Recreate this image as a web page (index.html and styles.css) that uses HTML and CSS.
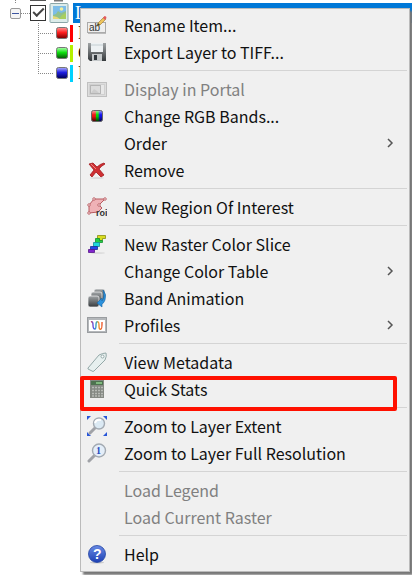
FILE: index.html
```
<!DOCTYPE html>
<html lang="en">
<head>
<meta charset="utf-8">
<title>Layer Manager</title>
<link rel="stylesheet" href="styles.css">
</head>
<body>
<svg class="defs" aria-hidden="true">
  <defs>
    <linearGradient id="gray" x1="0" y1="0" x2="0" y2="1"><stop offset="0" stop-color="#a0a4a6"/><stop offset="1" stop-color="#35393c"/></linearGradient>
    <linearGradient id="red" x1="0" y1="0" x2="0" y2="1"><stop offset="0" stop-color="#ff9a9a"/><stop offset=".45" stop-color="#ff2020"/><stop offset="1" stop-color="#700"/></linearGradient>
    <linearGradient id="green" x1="0" y1="0" x2="0" y2="1"><stop offset="0" stop-color="#b0ffb0"/><stop offset=".45" stop-color="#10e010"/><stop offset="1" stop-color="#065006"/></linearGradient>
    <linearGradient id="blue" x1="0" y1="0" x2="0" y2="1"><stop offset="0" stop-color="#b0b0ff"/><stop offset=".45" stop-color="#2020e0"/><stop offset="1" stop-color="#000050"/></linearGradient>
    <linearGradient id="rgb"><stop offset=".1" stop-color="#f01414"/><stop offset=".35" stop-color="#f01414"/><stop offset=".45" stop-color="#0d0"/><stop offset=".6" stop-color="#0d0"/><stop offset=".75" stop-color="#11e"/></linearGradient>
    <linearGradient id="shade" x1="0" y1="0" x2="0" y2="1"><stop offset="0" stop-color="#fff" stop-opacity=".6"/><stop offset=".4" stop-color="#fff" stop-opacity="0"/><stop offset=".5" stop-opacity="0"/><stop offset="1" stop-opacity=".75"/></linearGradient>
    <linearGradient id="help" x1="0" y1="0" x2="0" y2="1"><stop offset="0" stop-color="#6a8be4"/><stop offset="1" stop-color="#1c40b4"/></linearGradient>
    <linearGradient id="wave" gradientUnits="userSpaceOnUse" x1="3" y1="0" x2="17" y2="0"><stop offset="0" stop-color="#e33"/><stop offset=".25" stop-color="#55e"/><stop offset=".45" stop-color="#3ab"/><stop offset=".6" stop-color="#e93"/><stop offset="1" stop-color="#e32"/></linearGradient>
  </defs>
</svg>
<main class="tree">
  <svg class="previous" width="72" height="3" viewBox="0 0 72 3" aria-hidden="true"><path d="M15.500 0v3" stroke="#888" stroke-dasharray="1 1"/><path d="M30 .5h16" stroke="#555"/><path d="M54 .5h9" stroke="#777" stroke-width="2"/></svg>
  <div class="row parent">
    <button class="expander" aria-label="Collapse"></button>
    <span class="link"></span>
    <input class="check" type="checkbox" checked aria-label="Layer visible">
    <svg class="raster" width="20" height="20" viewBox="0 0 20 20"><rect x="1" y=".5" width="18" height="19" rx="1" fill="#dcecea" stroke="#8aa6a8"/><rect x="4" y="3" width="13" height="13" fill="#7cbde8"/><path d="M4 12l3-1 2-3 3 2 5-2v8H4z" fill="#8fc08c"/><path d="M4 16v-3l4 1 3 2z" fill="#e6d878"/><path d="M10 16l3-4 4-2v6z" fill="#a8cf60"/><circle cx="12.500" cy="6" r="1.800" fill="#f3ef9c"/></svg>
    <span class="name selected">L</span>
  </div>
  <div class="row band"><svg width="12" height="12"><rect x=".5" y=".5" width="11" height="11" rx="2" fill="url(#red)" stroke="#777"/></svg><i class="bar bar-red"></i><span class="name">R</span></div>
  <div class="row band"><svg width="12" height="12"><rect x=".5" y=".5" width="11" height="11" rx="2" fill="url(#green)" stroke="#777"/></svg><i class="bar bar-green"></i><span class="name">G</span></div>
  <div class="row band"><svg width="12" height="12"><rect x=".5" y=".5" width="11" height="11" rx="2" fill="url(#blue)" stroke="#777"/></svg><i class="bar bar-blue"></i><span class="name">B</span></div>
</main>
<nav class="menu" aria-label="Layer">
  <button class="item"><svg viewBox="0 0 20 20"><rect x=".5" y="7.500" width="18" height="10" fill="#eee" stroke="#aaa"/><path d="M1 18.500h18" stroke="#bbb"/><text x="2" y="16" class="ab">ab</text><path d="M10 11l1-3 6-6 2 2-6 6z" fill="#edc45c" stroke="#a8823c" stroke-width=".7"/><path d="M10 11l1-3 2 2z" fill="#443"/><path d="M16 3l1.500-2q2 0 2 2L18 5z" fill="#e25a60"/></svg>Rename Item...</button>
  <button class="item"><svg viewBox="0 0 20 20"><path d="M1 1h18v18H3l-2-2z" fill="url(#gray)"/><rect x="4" y="1" width="12" height="9" fill="#edf1f3"/><path d="M4 3h12" stroke="#c4ced2"/><rect x="5" y="12" width="10" height="7" fill="#c4c8ca"/><rect x="7" y="13" width="3" height="5" fill="#30373c"/></svg>Export Layer to TIFF...</button>
  <hr>
  <button class="item" disabled><svg viewBox="0 0 20 20"><rect x=".5" y="3.500" width="19" height="14" fill="#ddd" stroke="#c0c0c0"/><rect x="2.500" y="5.500" width="15" height="10" fill="#e8e8e8" stroke="#d0d0d0"/><rect x="3.500" y="6.500" width="10" height="8" fill="#dcdcdc" stroke="#888" stroke-dasharray="1 1"/><path d="M4 14l3-4 3 2 2 2z" fill="#ccc"/></svg>Display in Portal</button>
  <button class="item"><svg viewBox="0 0 20 20"><rect x="4.500" y="4.500" width="11" height="11" rx="2" fill="url(#rgb)"/><rect x="4.500" y="4.500" width="11" height="11" rx="2" fill="url(#shade)" stroke="#666"/></svg>Change RGB Bands...</button>
  <button class="item">Order<svg class="arrow" viewBox="0 0 8 10"><path d="M2 1l4 4-4 4"/></svg></button>
  <button class="item"><svg viewBox="0 0 20 20"><ellipse cx="10" cy="18" rx="7" ry="1" fill="#ddd"/><path d="M2 4l4-1 4 4q3-3 7-4l1 1q-4 2-6 5l5 6-3 2-5-5-4 5-2-2 4-5z" fill="#cf2f32" stroke="#a2191e" stroke-width=".8"/><path d="M4 4l5 5" stroke="#ed8580"/></svg>Remove</button>
  <hr>
  <button class="item"><svg viewBox="0 0 20 20"><path d="M2 8l5-6h11l-6 6 3 3-4 4-9 1z" fill="#efb2b6" stroke="#b85a60"/><g fill="#f6dadc" stroke="#b85a60" stroke-width=".8"><circle cx="2" cy="8" r="1.300"/><circle cx="7" cy="2" r="1.300"/><circle cx="18" cy="2" r="1.300"/><circle cx="12" cy="8" r="1.300"/><circle cx="2" cy="16" r="1.300"/></g><text x="9" y="19" class="roi">roi</text></svg>New Region Of Interest</button>
  <hr>
  <button class="item"><svg viewBox="0 0 20 20"><ellipse cx="11" cy="19" rx="7" ry="1" fill="#ddd"/><g stroke-width=".8"><path d="M10.500 1.500h8v3h-3v2h-3v-2h-2z" fill="#d8dc20" stroke="#898e10"/><path d="M8.500 4.500h4v2h3v2h-7z" fill="#25cf45" stroke="#129030"/><path d="M6.500 8.500h6v4h-6z" fill="#20d8dc" stroke="#169097"/><path d="M3.500 12.500h7v3h-7z" fill="#2644e8" stroke="#182d96"/><path d="M1.500 15.500h6v3h-6z" fill="#8025cd" stroke="#551589"/></g></svg>New Raster Color Slice</button>
  <button class="item">Change Color Table<svg class="arrow" viewBox="0 0 8 10"><path d="M2 1l4 4-4 4"/></svg></button>
  <button class="item"><svg viewBox="0 0 20 20"><g fill="url(#gray)" stroke="#f4f4f4" stroke-width=".7"><rect x="7" y="1" width="11" height="12" rx="2"/><rect x="4" y="4" width="11" height="12" rx="2"/><rect x="1" y="8" width="11" height="11" rx="2"/></g><path d="M16 2q4 4 2 10-1 3-3 4v3l-5-4 5-5v3q3-4 1-11z" fill="#2b91dc" stroke="#1765a5" stroke-width=".6"/></svg>Band Animation</button>
  <button class="item"><svg viewBox="0 0 20 20"><rect x=".5" y="2.500" width="19" height="15" fill="#b4b7ba" stroke="#9a9da0"/><rect x="2" y="5" width="16" height="11" fill="#fff"/><path d="M4 7q2-1 2 3t2 4q1 0 1-4t2-3q1 0 1 4t2 3q1 0 1-7" fill="none" stroke="url(#wave)" stroke-width="1.400"/></svg>Profiles<svg class="arrow" viewBox="0 0 8 10"><path d="M2 1l4 4-4 4"/></svg></button>
  <hr>
  <button class="item"><svg viewBox="0 0 20 20"><path d="M1 16L12 3q4-2 7-2 1 3-1 7L7 19q-1 1-2 0l-4-2z" fill="#e7f0ef" stroke="#94a8a8"/><circle cx="15.500" cy="4.500" r="1.500" fill="#fff" stroke="#94a8a8"/></svg>View Metadata</button>
  <button class="item marked"><svg viewBox="0 0 20 20"><rect x="3" y="1" width="14" height="18" fill="#858983"/><rect x="4" y="2" width="12" height="4" fill="#4e7250"/><path d="M9 4h6" stroke="#80ba7e" stroke-width="2"/><path d="M5 8.500h11M5 11.500h11M5 14.500h11M5 17h11" stroke="#b8bbb6" stroke-width="1.600" stroke-dasharray="2 1"/></svg>Quick Stats</button>
  <hr>
  <button class="item"><svg viewBox="0 0 20 20"><g fill="#2856d8"><path d="M0 0h4L0 4zM20 0h-4l4 4zM0 20h4l-4-4zM20 20h-4l4-4z"/></g><path d="M8 12l-5 5" stroke="#a0a2a7" stroke-width="3" stroke-linecap="round"/><circle cx="12" cy="7.500" r="5.500" fill="#dbe9f3" stroke="#a3aab2" stroke-width="1.400"/><path d="M8 7q1-4 6-3" fill="none" stroke="#fff" stroke-width="2"/></svg>Zoom to Layer Extent</button>
  <button class="item"><svg viewBox="0 0 20 20"><path d="M8 12l-6 6" stroke="#a0a2a7" stroke-width="3" stroke-linecap="round"/><circle cx="12" cy="7.500" r="6.500" fill="#e4eef9" stroke="#a3aab2" stroke-width="1.400"/><text x="9" y="11" class="one">1</text></svg>Zoom to Layer Full Resolution</button>
  <hr>
  <button class="item" disabled>Load Legend</button>
  <button class="item" disabled>Load Current Raster</button>
  <hr>
  <button class="item"><svg viewBox="0 0 20 20"><ellipse cx="10" cy="18.500" rx="7" ry="1" fill="#ccc"/><circle cx="10" cy="10" r="8.500" fill="url(#help)" stroke="#2345a5" stroke-width=".8"/><text x="6" y="15" class="question">?</text></svg>Help</button>
</nav>
</body>
</html>
```
FILE: styles.css
```
*, *::before, *::after { box-sizing: border-box; }
body { margin: 0; min-height: 100vh; background: #fff; position: relative; overflow: hidden; }
.defs { position: absolute; width: 0; height: 0; }
.tree { font: 18px/20px "Liberation Serif", serif; color: #000; }
.previous { display: block; }
.row { display: flex; align-items: center; height: 20px; }
.parent { padding-left: 10px; }
.expander { width: 11px; height: 11px; padding: 0; border: 1px solid #999; border-radius: 2px; background: linear-gradient(#3c55a0, #3c55a0) center / 7px 1px no-repeat #f4f4f4; }
.link { width: 9px; border-top: 1px dotted #888; }
.check { appearance: none; flex: none; width: 16px; height: 16px; margin: 0 3px 0 0; border: 1px solid #333; background: #fff; position: relative; }
.check::after { content: ""; position: absolute; left: 2px; top: 2px; width: 11px; height: 6px; border: solid #444; border-width: 0 0 2px 2px; transform: rotate(-45deg); }
.raster { flex: none; margin-right: 4px; }
.name { padding-left: 3px; }
.selected { flex: 1; height: 20px; padding-left: 2px; background: #0078d7; color: #fff; }
.band { padding-left: 38px; gap: 2px; }
.band::before { content: ""; width: 15px; height: 20px; margin-right: 1px; background: repeating-linear-gradient(90deg, #888 0 1px, transparent 1px 2px) 0 10px / 100% 1px no-repeat, repeating-linear-gradient(#888 0 1px, transparent 1px 2px) 0 0 / 1px 100% no-repeat; }
.band:last-child::before { background-size: 100% 1px, 1px 50%; }
.bar { width: 3px; height: 17px; }
.bar-red { background: #f00; }
.bar-green { background: #b4f000; }
.bar-blue { background: #00d2ff; }
.menu { position: absolute; left: 80px; right: 2px; top: 8px; padding: 2px 2px 4px; background: #f0f0f0; border: 1px solid #bbb; box-shadow: 3px 3px 2px #777; }
.item { display: flex; align-items: center; position: relative; width: 100%; height: 27px; padding: 0 13px 0 41px; border: 0; background: none; color: #111; font: 16px/20px "Noto Sans CJK SC", sans-serif; text-align: left; white-space: nowrap; }
.item:disabled { color: #808080; }
.item > svg:first-child:not(.arrow) { width: 20px; height: 20px; margin: 0 17px 0 -37px; flex: none; }
.item > .arrow { width: 8px; height: 10px; margin-left: auto; fill: none; stroke: #555; stroke-width: 1.5; }
.menu hr { height: 10px; margin: 0 0 0 36px; border: 0; background: linear-gradient(#d4d4d4, #d4d4d4) center / 100% 1px no-repeat; }
.marked::after { content: ""; position: absolute; left: -3px; right: 10px; top: 1px; height: 35px; border: 4px solid #ff1000; border-radius: 2px; z-index: 1; }
.ab { font: 10px "Liberation Sans", sans-serif; fill: #333; }
.roi { font: bold 9px "Liberation Sans", sans-serif; fill: #333; }
.one { font: bold 10px "Liberation Serif", serif; fill: #2449bd; }
.question { font: bold 14px "Liberation Sans", sans-serif; fill: #fff; }
```
